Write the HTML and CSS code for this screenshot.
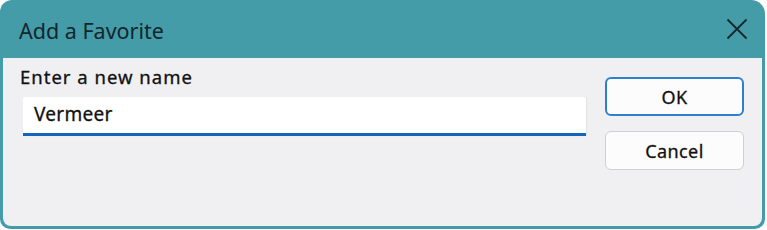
FILE: index.html
```html
<!DOCTYPE html>
<html lang="en">

<head>
	<meta charset="UTF-8">
	<meta name="viewport" content="width=device-width, initial-scale=1.0">
	<title>Add a Favorite</title>
	<link rel="stylesheet" href="styles.css">
</head>

<body>

	<div class="dialog">
		<div class="dialog-titlebar">
			<div class="dialog-title">Add a Favorite</div>
			<div class="dialog-close">
				<svg width="22" height="22" viewBox="0 0 22 22">
					<path d="M1.5 1.5 L20.5 20.5 M20.5 1.5 L1.5 20.5" stroke="#15262a" stroke-width="1.8" fill="none" />
				</svg>
			</div>
		</div>
		<div class="dialog-body">
			<div class="name-field">
				<label class="name-label" for="name-input">Enter a new name</label>
				<div class="name-input" id="name-input">Vermeer</div>
			</div>
			<div class="dialog-buttons">
				<div class="btn btn-default">OK</div>
				<div class="btn">Cancel</div>
			</div>
		</div>
	</div>

</body>

</html>
```

FILE: styles.css
```css
body {
	margin: 0;
	background-color: #ffffff;
	font-family: 'Noto Sans', 'Open Sans', sans-serif;
	color: #1a1a1a;
}

.dialog {
	width: 765px;
	height: 229px;
	display: flex;
	flex-direction: column;
	background-color: #449ca9;
	border-radius: 12px 14px 10px 10px;
}

.dialog-titlebar {
	height: 58px;
	display: flex;
	align-items: center;
	justify-content: space-between;
	padding: 0 17px 0 19px;
}

.dialog-title {
	font-size: 21.5px;
	color: #14262a;
	margin-top: 2px;
}

.dialog-close {
	display: flex;
	margin-top: -1px;
}

.dialog-body {
	flex: 1;
	display: flex;
	margin: 0 3px 3px 3px;
	background-color: #f0eff2;
	border-radius: 0 0 8px 8px;
	padding: 0 18px 0 20px;
}

.name-field {
	flex: 1;
	display: flex;
	flex-direction: column;
	padding-top: 6px;
}

.name-label {
	font-size: 18.5px;
	letter-spacing: 1px;
	-webkit-text-stroke: 0.3px #111;
	line-height: 26px;
	margin-left: -3px;
	color: #111;
}

.name-input {
	margin-top: 7px;
	height: 39px;
	box-sizing: border-box;
	background-color: #ffffff;
	border-bottom: 3px solid #1565c0;
	border-radius: 2px 2px 0 0;
	padding: 0 11px;
	font-size: 19px;
	letter-spacing: 0.3px;
	-webkit-text-stroke: 0.3px #111;
	line-height: 35px;
	color: #111;
	box-shadow: 1px 0 1px #e2e2e2;
	width: 563px;
}

.dialog-buttons {
	display: flex;
	flex-direction: column;
	gap: 15px;
	padding-top: 19px;
	margin-left: 19px;
}

.btn {
	width: 139px;
	height: 39px;
	box-sizing: border-box;
	border: 1px solid #d0d0d0;
	border-radius: 6px;
	background-color: #fcfcfc;
	display: flex;
	align-items: center;
	justify-content: center;
	font-size: 18px;
	letter-spacing: 0.4px;
	-webkit-text-stroke: 0.3px #111;
	color: #111;
}

.btn-default {
	border: 2px solid #2f7fd0;
}
```
